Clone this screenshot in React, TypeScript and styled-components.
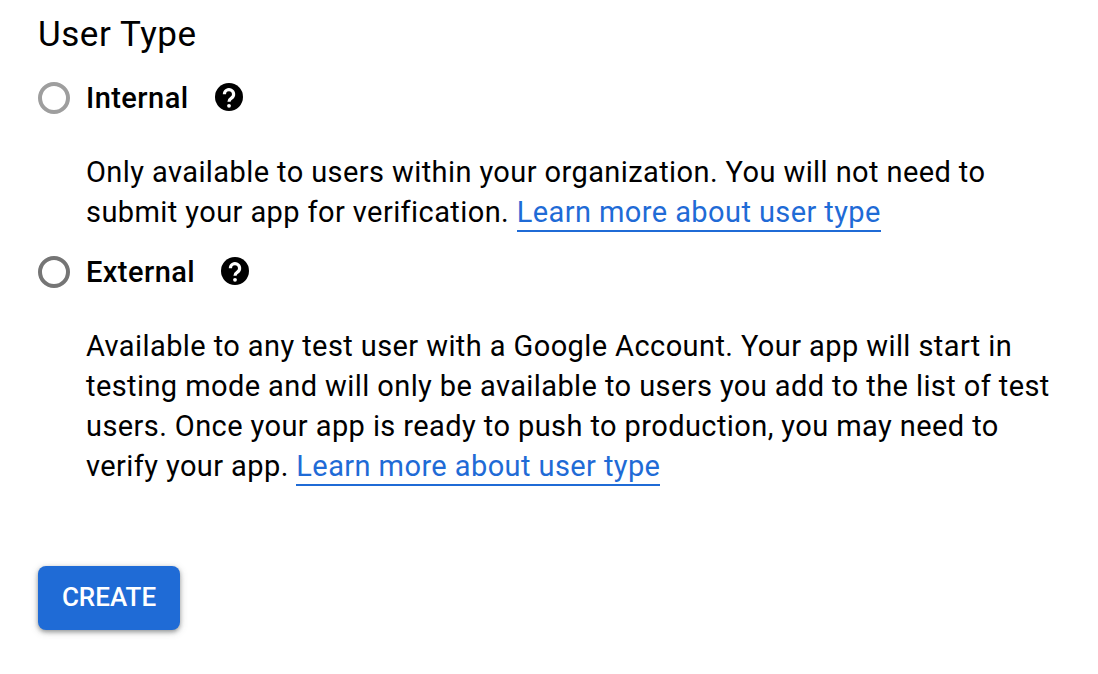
import React from "react";
import styled, { createGlobalStyle } from "styled-components";

const Global = createGlobalStyle`
  html, body { margin: 0; padding: 0; background: #fff; }
  body { font-family: Roboto, "Liberation Sans", sans-serif; color: #000; }
`;

const Page = styled.main`
  display: flex;
  flex-direction: column;
  align-items: flex-start;
  padding: 15px 40px 0 38px;
  width: 1098px;
  height: 674px;
  box-sizing: border-box;
  overflow: hidden;
`;

const Heading = styled.h2`
  margin: 0 0 23px;
  font-size: 35px;
  line-height: 40px;
  font-weight: 400;
  letter-spacing: 0.55px;
`;

const Option = styled.section`
  display: flex;
  flex-direction: column;
`;

const OptionHead = styled.div`
  display: flex;
  align-items: center;
  height: 40px;
`;

const Radio = styled.span<{ $color: string }>`
  width: 32px;
  height: 32px;
  box-sizing: border-box;
  border: 4px solid ${(p) => p.$color};
  border-radius: 50%;
  margin-right: 16px;
`;

const Label = styled.span`
  font-size: 29px;
  font-weight: 500;
  line-height: 40px;
  letter-spacing: 0.45px;
`;

const Help = styled.svg`
  width: 28px;
  height: 28px;
  margin-left: 26px;
  margin-top: -3px;
`;

const Description = styled.p`
  margin: 34px 0 20px 48px;
  font-size: 29px;
  line-height: 40px;
  letter-spacing: 0.41px;
  width: 970px;
`;

const LearnMore = styled.a`
  color: #1f6bd6;
  text-decoration: none;
  border-bottom: 2px solid #1f6bd6;
  padding-bottom: 1px;
`;

const CreateButton = styled.button`
  margin-top: 60px;
  padding: 0 0 2px;
  width: 142px;
  height: 64px;
  border: 0;
  border-radius: 8px;
  background: #1f6bd6;
  color: #fff;
  font-family: inherit;
  font-size: 26px;
  font-weight: 500;
  box-shadow: 0 2px 4px rgba(60, 64, 67, 0.45), 0 2px 8px rgba(60, 64, 67, 0.2);
`;

const HelpIcon = () => (
  <Help viewBox="0 0 28 28" aria-hidden="true">
    <circle cx="14" cy="14" r="14" fill="#000" />
    <path
      d="M9.4 11.2a4.6 4.6 0 1 1 7.3 3.7c-1.7 1.2-2.7 1.9-2.7 3.9"
      fill="none"
      stroke="#fff"
      strokeWidth="3.2"
    />
    <circle cx="14" cy="22.8" r="1.9" fill="#fff" />
  </Help>
);

export default function App() {
  return (
    <Page>
      <Global />
      <Heading>User Type</Heading>
      <Option>
        <OptionHead>
          <Radio $color="#9e9e9e" />
          <Label>Internal</Label>
          <HelpIcon />
        </OptionHead>
        <Description>
          Only available to users within your organization. You will not need to submit your app for verification.{" "}
          <LearnMore href="#">Learn more about user type</LearnMore>
        </Description>
      </Option>
      <Option>
        <OptionHead>
          <Radio $color="#757575" />
          <Label>External</Label>
          <HelpIcon />
        </OptionHead>
        <Description>
          Available to any test user with a Google Account. Your app will start in testing mode and will only be available to users you add to the list of test users. Once your app is ready to push to production, you may need to verify your app.{" "}
          <LearnMore href="#">Learn more about user type</LearnMore>
        </Description>
      </Option>
      <CreateButton>CREATE</CreateButton>
    </Page>
  );
}
